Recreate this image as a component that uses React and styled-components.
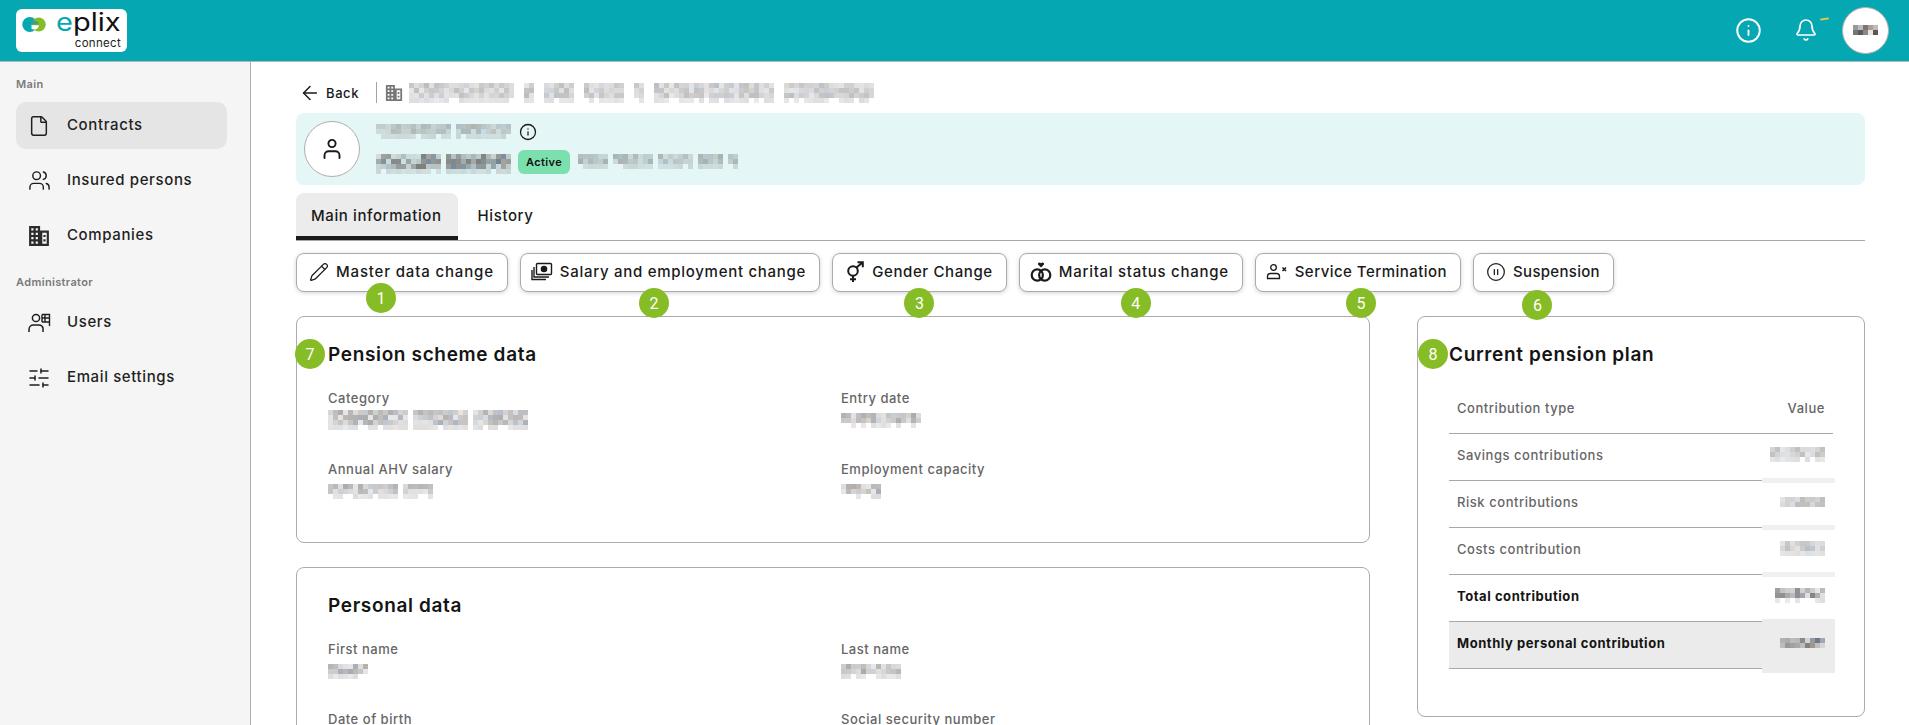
import styled, { createGlobalStyle } from "styled-components";
import { ArrowLeft, Bell, CirclePause, File, Info, Pencil, SlidersHorizontal, Users } from "lucide-react";

const GlobalStyle = createGlobalStyle`
  html, body {
    margin: 0;
    height: 100%;
    overflow: hidden;
    background: #fff;
    font-family: "Inter", "Noto Sans", sans-serif;
    color: #1a1a1a;
  }
  * { box-sizing: border-box; }
`

// blurred personal data in the screenshot, drawn as 5px cells
function seeded(seed) {
  let s = seed * 7919 + 13
  return () => {
    s = (s * 16807) % 2147483647
    return (s % 1000) / 1000
  }
}

function Mosaic({ w, rows = 3, seed = 1, strength = 0.35, gaps = [] }) {
  const rnd = seeded(seed)
  const cols = Math.round(w / 5)
  const cells = []
  for (let c = 0; c < cols; c++) {
    if (gaps.includes(c)) continue
    for (let r = 0; r < rows; r++) {
      const edge = rows > 2 && r === rows - 1
      const v = rnd()
      if (edge && v < 0.25) continue
      const opacity = (edge ? 0.1 : 0.14) + v * (edge ? 0.1 : strength)
      const hue = rnd()
      const fill = hue < 0.33 ? "#5d5148" : hue < 0.66 ? "#4c5a6c" : "#555555"
      cells.push(<rect key={`${c}-${r}`} x={c * 5} y={r * 5} width="5" height="5" fill={fill} fillOpacity={opacity} />)
    }
  }
  return <MosaicBox width={cols * 5} height={rows * 5}>{cells}</MosaicBox>
}

function BuildingIcon({ size = 20, color = "#2b2b2b" }) {
  return (
    <svg width={size} height={size} viewBox="0 0 20 20">
      <path fill={color} fillRule="evenodd" d="M1 1h10v4h8v14H1V1Zm2 2v2h2V3H3Zm4 0v2h2V3H7ZM3 7v2h2V7H3Zm4 0v2h2V7H7Zm-4 4v2h2v-2H3Zm4 0v2h2v-2H7Zm-4 4v2h2v-2H3Zm4 0v2h2v-2H7Zm6-8v10h4V7h-4Zm1 2h2v2h-2V9Zm0 4h2v2h-2v-2Z" />
    </svg>
  )
}

function UserAdminIcon() {
  return (
    <svg width="24" height="24" viewBox="0 0 24 24" fill="none" stroke="#1f1f1f" strokeWidth="1.5">
      <circle cx="9" cy="7" r="3.6" />
      <path d="M2 21v-2.5c0-2.6 2-4.5 4.5-4.5H12c2 0 3.5 1.2 4 3v4" />
      <path d="M15 3.5h7.5V15M15 3.5V11M18 3.5V11M15 7h7.5M15 11h7.5" strokeWidth="1.4" />
    </svg>
  )
}

function PersonIcon() {
  return (
    <svg width="24" height="24" viewBox="0 0 24 24" fill="none" stroke="#1a1a1a" strokeWidth="1.9" strokeLinecap="round">
      <circle cx="12" cy="6.5" r="3.6" />
      <path d="M4.5 21v-2.5c0-2.4 1.8-4.2 4.2-4.2h6.6c2.4 0 4.2 1.8 4.2 4.2V21" />
    </svg>
  )
}

function SalaryIcon() {
  return (
    <svg width="22" height="20" viewBox="0 0 22 20" fill="none" stroke="#1a1a1a" strokeWidth="1.4">
      <rect x="5.5" y="1.5" width="15" height="11" rx="1" />
      <circle cx="13" cy="7" r="2.6" fill="#1a1a1a" />
      <path d="M3 5v10h15M1 8v9.5h14" />
    </svg>
  )
}

function GenderIcon() {
  return (
    <svg width="20" height="22" viewBox="0 0 20 22" fill="none" stroke="#1a1a1a" strokeWidth="2">
      <circle cx="8" cy="10" r="4.8" />
      <path d="M11.5 6.5 17.5 1.5M12.5 1.3h5.3v5M8 15v6M5 18.3h6" />
    </svg>
  )
}

function RingsIcon() {
  return (
    <svg width="22" height="22" viewBox="0 0 22 22" fill="none" stroke="#1a1a1a" strokeWidth="2.2">
      <circle cx="7.3" cy="14" r="5.6" />
      <circle cx="14.7" cy="14" r="5.6" />
      <path d="M11 6.6 8.2 3.8c-1.2-1.6 1.4-3.2 2.8-1.5 1.4-1.7 4-.1 2.8 1.5L11 6.6Z" fill="#1a1a1a" stroke="none" />
    </svg>
  )
}

function TerminationIcon() {
  return (
    <svg width="22" height="18" viewBox="0 0 22 18" fill="none" stroke="#1a1a1a" strokeWidth="1.3">
      <circle cx="7.5" cy="4.5" r="2.8" />
      <path d="M1.5 15.5v-2c0-2 1.4-3 3-3h6c1.6 0 3 1 3 3v2h-12Z" />
      <path d="M16.5 4.5l3.5 3.5M20 4.5 16.5 8" strokeWidth="1.5" />
    </svg>
  )
}

const navMain = [
  { label: "Contracts", icon: <File size={22} strokeWidth={1.6} />, active: true },
  { label: "Insured persons", icon: <Users size={23} strokeWidth={1.5} /> },
  { label: "Companies", icon: <BuildingIcon size={22} /> },
]

const navAdmin = [
  { label: "Users", icon: <UserAdminIcon /> },
  { label: "Email settings", icon: <SlidersHorizontal size={24} strokeWidth={1.5} /> },
]

const actions = [
  { label: "Master data change", icon: <Pencil size={20} strokeWidth={1.5} />, n: 1, x: -21, y: 2, track: 0.84 },
  { label: "Salary and employment change", icon: <SalaryIcon />, n: 2, x: -16, y: 7, track: 0.72 },
  { label: "Gender Change", icon: <GenderIcon />, n: 3, x: 0, y: 7, track: 0.62 },
  { label: "Marital status change", icon: <RingsIcon />, n: 4, x: 5, y: 7, track: 0.72 },
  { label: "Service Termination", icon: <TerminationIcon />, n: 5, x: 3, y: 7, track: 0.47 },
  { label: "Suspension", icon: <CirclePause size={20} strokeWidth={1.5} />, n: 6, x: -6, y: 9, track: 0.3 },
]

const contributions = [
  { label: "Savings contributions", w: 55, rows: 3, seed: 31 },
  { label: "Risk contributions", w: 45, rows: 2, seed: 32 },
  { label: "Costs contribution", w: 45, rows: 3, seed: 33 },
  { label: "Total contribution", w: 50, rows: 3, seed: 34, bold: true, strength: 0.6 },
  { label: "Monthly personal contribution", w: 45, rows: 2, seed: 35, bold: true, strength: 0.7, shaded: true },
]

export default function App() {
  return (
    <>
      <GlobalStyle />
      <Page>
        <Header>
          <Logo>
            <svg width="24" height="15" viewBox="0 0 25 16">
              <circle cx="8" cy="8" r="8" fill="#07a8b2" />
              <circle cx="17.5" cy="8" r="7.5" fill="#86bc25" />
              <path d="M10 8h7.5c-.4-2.6-2.5-4.2-4.8-4.2-1.3 0-2.3.4-3.1 1 .5.9.6 2 .4 3.2Z" fill="#3f9c8e" />
              <path d="M9.5 8.7h8.3c-.3 2.8-2.4 4.7-5 4.7-1.2 0-2.4-.4-3.2-1.1.6-1.1.4-2.4-.1-3.6Z" fill="#fff" />
            </svg>
            <LogoWords>
              <LogoName><em>e</em>plix</LogoName>
              <LogoSub>connect</LogoSub>
            </LogoWords>
          </Logo>
          <HeaderActions>
            <Info size={27} color="#fff" strokeWidth={1.7} />
            <BellWrap>
              <Bell size={24} color="#fff" strokeWidth={1.7} />
              <BellMark />
            </BellWrap>
            <HeaderAvatar>
              <Mosaic w={25} rows={2} seed={40} strength={0.9} />
            </HeaderAvatar>
          </HeaderActions>
        </Header>

        <Body>
          <Sidebar>
            <SectionLabel $top={12} $bottom={8}>Main</SectionLabel>
            <NavList>
              {navMain.map((item) => (
                <NavItem key={item.label} $active={item.active}>
                  <NavIcon>{item.icon}</NavIcon>
                  <NavLabel>{item.label}</NavLabel>
                </NavItem>
              ))}
            </NavList>
            <SectionLabel $top={13} $bottom={7}>Administrator</SectionLabel>
            <NavList>
              {navAdmin.map((item) => (
                <NavItem key={item.label}>
                  <NavIcon>{item.icon}</NavIcon>
                  <NavLabel>{item.label}</NavLabel>
                </NavItem>
              ))}
            </NavList>
          </Sidebar>

          <Main>
            <Breadcrumb>
              <BackLink>
                <ArrowLeft size={22} strokeWidth={1.6} />
                Back
              </BackLink>
              <Divider />
              <BuildingIcon size={18} color="#777" />
              <CrumbBlur>
                <Mosaic w={465} rows={4} seed={2} strength={0.24} gaps={[21, 22, 25, 26, 33, 34, 43, 44, 47, 48, 73, 74]} />
              </CrumbBlur>
            </Breadcrumb>

            <PersonBand>
              <PersonAvatar><PersonIcon /></PersonAvatar>
              <PersonText>
                <PersonRow>
                  <Mosaic w={135} rows={3} seed={3} strength={0.25} gaps={[15]} />
                  <Info size={18} strokeWidth={1.7} />
                </PersonRow>
                <PersonRow>
                  <NameBlur>
                    <Mosaic w={135} rows={4} seed={4} strength={0.6} gaps={[13]} />
                  </NameBlur>
                  <StatusPill>Active</StatusPill>
                  <Mosaic w={160} rows={3} seed={5} strength={0.3} gaps={[6, 15, 23, 29]} />
                </PersonRow>
              </PersonText>
            </PersonBand>

            <Tabs>
              <Tab $active>Main information</Tab>
              <Tab>History</Tab>
            </Tabs>

            <ActionBar>
              {actions.map((a) => (
                <ActionButton key={a.label} $track={a.track}>
                  <ActionIcon>{a.icon}</ActionIcon>
                  {a.label}
                  <ButtonBadge $x={a.x} $y={a.y}>{a.n}</ButtonBadge>
                </ActionButton>
              ))}
            </ActionBar>

            <Columns>
              <Stack>
                <Card>
                  <CardBadge $left={-2}>7</CardBadge>
                  <CardTitle>Pension scheme data</CardTitle>
                  <FieldGrid $gap={27}>
                    <Field>
                      <FieldLabel>Category</FieldLabel>
                      <FieldValue><Mosaic w={200} rows={4} seed={6} gaps={[16, 28]} /></FieldValue>
                    </Field>
                    <Field>
                      <FieldLabel>Entry date</FieldLabel>
                      <FieldValue><Mosaic w={80} rows={3} seed={7} /></FieldValue>
                    </Field>
                    <Field>
                      <FieldLabel>Annual AHV salary</FieldLabel>
                      <FieldValue><Mosaic w={105} rows={3} seed={8} gaps={[14]} /></FieldValue>
                    </Field>
                    <Field>
                      <FieldLabel>Employment capacity</FieldLabel>
                      <FieldValue><Mosaic w={40} rows={3} seed={9} /></FieldValue>
                    </Field>
                  </FieldGrid>
                </Card>
                <Card>
                  <CardTitle>Personal data</CardTitle>
                  <FieldGrid $gap={26}>
                    <Field>
                      <FieldLabel>First name</FieldLabel>
                      <FieldValue><Mosaic w={40} rows={3} seed={10} /></FieldValue>
                    </Field>
                    <Field>
                      <FieldLabel>Last name</FieldLabel>
                      <FieldValue><Mosaic w={60} rows={3} seed={11} /></FieldValue>
                    </Field>
                    <Field>
                      <FieldLabel>Date of birth</FieldLabel>
                    </Field>
                    <Field>
                      <FieldLabel>Social security number</FieldLabel>
                    </Field>
                  </FieldGrid>
                </Card>
              </Stack>

              <Card $tall>
                <CardBadge $left={0}>8</CardBadge>
                <CardTitle>Current pension plan</CardTitle>
                <PlanTable>
                  <PlanRow>
                    <span>Contribution type</span>
                    <span>Value</span>
                  </PlanRow>
                  {contributions.map((c) => (
                    <PlanRow key={c.label} $bold={c.bold} $shaded={c.shaded} $smudge>
                      <span>{c.label}</span>
                      <PlanValue>
                        <Mosaic w={c.w} rows={c.rows} seed={c.seed} strength={c.strength ?? 0.25} />
                      </PlanValue>
                    </PlanRow>
                  ))}
                </PlanTable>
              </Card>
            </Columns>
          </Main>
        </Body>
      </Page>
    </>
  );
}

const Page = styled.div`
  height: 100vh;
  display: flex;
  flex-direction: column;
  overflow: hidden;
`

const Header = styled.header`
  flex: none;
  height: 62px;
  background: #05a8b2;
  border-bottom: 1px solid #b5b5b5;
  display: flex;
  align-items: center;
  justify-content: space-between;
  padding: 0 20px 1px 16px;
`

const Logo = styled.div`
  width: 111px;
  height: 43px;
  background: #fff;
  border-radius: 6px;
  display: flex;
  align-items: flex-start;
  padding: 8px 6px 0 6px;
  gap: 8px;
`

const LogoWords = styled.div`
  flex: 1;
  display: flex;
  flex-direction: column;
  align-items: flex-end;
  margin-top: -7px;
`

const LogoName = styled.div`
  font-size: 25px;
  line-height: 25px;
  font-weight: 400;
  color: #111;
  transform: scaleX(1.16);
  transform-origin: right center;
  em {
    font-style: normal;
    color: #07a8b2;
  }
`

const LogoSub = styled.div`
  font-size: 11.5px;
  line-height: 12px;
  letter-spacing: 0.3px;
  color: #222;
  margin-top: 2px;
`

const HeaderActions = styled.div`
  display: flex;
  align-items: center;
`

const BellWrap = styled.div`
  position: relative;
  display: flex;
  margin: 0 24px 0 32px;
`

const BellMark = styled.span`
  position: absolute;
  top: 0;
  right: -11px;
  width: 9px;
  height: 1.5px;
  border-radius: 1px;
  background: #d9c65a;
  transform: rotate(-8deg);
`

const HeaderAvatar = styled.div`
  width: 47px;
  height: 47px;
  border-radius: 50%;
  background: #fff;
  border: 1px solid #b9b0aa;
  display: flex;
  align-items: center;
  justify-content: center;
`

const Body = styled.div`
  flex: 1;
  min-height: 0;
  display: grid;
  grid-template-columns: 251px 1fr;
`

const Sidebar = styled.aside`
  background: #f5f5f5;
  border-right: 1px solid #b0b0b0;
  padding: 0 23px 0 16px;
`

const SectionLabel = styled.div`
  font-size: 11px;
  line-height: 20px;
  font-weight: 600;
  letter-spacing: 0.35px;
  color: #7a7a7a;
  margin: ${({ $top, $bottom }) => `${$top}px 0 ${$bottom}px`};
`

const NavList = styled.nav`
  display: flex;
  flex-direction: column;
  gap: 8px;
`

const NavItem = styled.div`
  height: 47px;
  display: flex;
  align-items: center;
  gap: 16px;
  padding-left: 11px;
  border-radius: 10px;
  background: ${({ $active }) => ($active ? "#e5e5e5" : "transparent")};
  font-size: 15px;
  font-weight: 500;
  letter-spacing: 0.62px;
  color: #1f1f1f;
`

const NavIcon = styled.span`
  width: 24px;
  display: flex;
  justify-content: center;
`

const NavLabel = styled.span`
  margin-bottom: 2px;
`

const Main = styled.main`
  padding: 20px 44px 0 45px;
  min-width: 0;
`

const Breadcrumb = styled.div`
  height: 21px;
  display: flex;
  align-items: center;
  margin-bottom: 10px;
`

const BackLink = styled.div`
  display: flex;
  align-items: center;
  gap: 5px;
  padding-left: 3px;
  font-size: 13px;
  font-weight: 500;
  letter-spacing: 0.6px;
`

const Divider = styled.span`
  width: 1px;
  height: 21px;
  background: #a5a5a5;
  margin: 0 8px 0 17px;
`

const CrumbBlur = styled.span`
  margin-left: 6px;
`

const MosaicBox = styled.svg`
  display: block;
  flex: none;
  shape-rendering: crispEdges;
`

const PersonBand = styled.section`
  height: 72px;
  background: #e4f6f6;
  border-radius: 8px;
  display: flex;
  align-items: center;
  gap: 16px;
  padding: 0 0 1px 8px;
`

const PersonAvatar = styled.div`
  width: 56px;
  height: 56px;
  border-radius: 50%;
  background: #fff;
  border: 1px solid #aeaeae;
  display: flex;
  align-items: center;
  justify-content: center;
`

const PersonText = styled.div`
  display: flex;
  flex-direction: column;
  gap: 9px;
  margin-bottom: 1px;
`

const PersonRow = styled.div`
  display: flex;
  align-items: center;
  gap: 8px;
`

const NameBlur = styled.span`
  padding-top: 4px;
  margin-right: -1px;
`

const StatusPill = styled.span`
  width: 52px;
  height: 24px;
  border-radius: 6px;
  background: #7bdfae;
  display: flex;
  align-items: center;
  justify-content: center;
  font-size: 11px;
  font-weight: 600;
  letter-spacing: 0.4px;
  color: #111;
`

const Tabs = styled.div`
  margin-top: 8px;
  height: 48px;
  display: flex;
  border-bottom: 1px solid #a8a8a8;
`

const Tab = styled.div`
  height: 47px;
  display: flex;
  align-items: center;
  padding: ${({ $active }) => ($active ? "2px 16px 0 15px" : "0 20px 2px")};
  font-size: 15px;
  font-weight: 500;
  letter-spacing: 0.6px;
  background: ${({ $active }) => ($active ? "#ececec" : "transparent")};
  border-radius: 8px 8px 0 0;
  border-bottom: ${({ $active }) => ($active ? "4px solid #1a1a1a" : "none")};
`

const ActionBar = styled.div`
  margin-top: 12px;
  display: flex;
  gap: 12px;
`

const ActionButton = styled.button`
  position: relative;
  height: 39px;
  display: flex;
  align-items: center;
  gap: 6px;
  padding: 0 13px 2px 10px;
  background: #fff;
  border: 1px solid #ababab;
  border-radius: 8px;
  box-shadow: 0 1px 4px rgba(0, 0, 0, 0.18);
  font-family: inherit;
  font-size: 15px;
  font-weight: 500;
  letter-spacing: ${({ $track }) => $track}px;
  color: #1a1a1a;
  white-space: nowrap;
`

const ActionIcon = styled.span`
  width: 23px;
  display: flex;
  justify-content: center;
`

const Badge = styled.span`
  position: absolute;
  z-index: 2;
  width: 30px;
  height: 30px;
  border-radius: 50%;
  background: #86bc25;
  display: flex;
  align-items: center;
  justify-content: center;
  font-family: "Roboto", sans-serif;
  font-size: 16px;
  font-weight: 400;
  letter-spacing: 0;
  color: #fff;
`

const ButtonBadge = styled(Badge)`
  left: calc(50% - 15px + ${({ $x }) => $x}px);
  top: calc(100% - 10px + ${({ $y }) => $y}px);
`

const CardBadge = styled(Badge)`
  left: ${({ $left }) => $left}px;
  top: 22px;
`

const Columns = styled.div`
  margin-top: 24px;
  display: grid;
  grid-template-columns: 1fr 448px;
  gap: 47px;
  align-items: start;
`

const Stack = styled.div`
  display: flex;
  flex-direction: column;
  gap: 24px;
`

const Card = styled.section`
  position: relative;
  border: 1px solid #ababab;
  border-radius: 8px;
  padding: 24px 31px 39px;
  padding-bottom: ${({ $tall }) => ($tall ? "47px" : "39px")};
`

const CardTitle = styled.h2`
  margin: 0 0 19px;
  font-size: 19px;
  line-height: 28px;
  font-weight: 600;
  letter-spacing: 0.65px;
  color: #141414;
`

const FieldGrid = styled.div`
  display: grid;
  grid-template-columns: 513px 1fr;
  row-gap: ${({ $gap }) => $gap}px;
`

const Field = styled.div`
  min-width: 0;
`

const FieldLabel = styled.div`
  font-size: 13px;
  line-height: 20px;
  font-weight: 500;
  letter-spacing: 0.52px;
  color: #666;
`

const FieldValue = styled.div`
  height: 24px;
  display: flex;
  align-items: center;
`

const PlanTable = styled.div`
  margin-top: -1px;
`

const PlanRow = styled.div`
  position: relative;
  height: 47px;
  display: flex;
  align-items: center;
  justify-content: space-between;
  padding: 0 8px 5px;
  border-bottom: 1px solid #a8a8a8;
  font-size: 13px;
  font-weight: ${({ $bold }) => ($bold ? 700 : 500)};
  letter-spacing: 0.55px;
  color: ${({ $bold }) => ($bold ? "#141414" : "#666")};
  background: ${({ $shaded }) => ($shaded ? "#ebebeb" : "transparent")};

  ${({ $smudge, $shaded }) => $smudge && `
    &::after {
      content: "";
      position: absolute;
      right: -2px;
      width: 73px;
      top: ${$shaded ? "-3px" : "auto"};
      bottom: ${$shaded ? "-5px" : "-3px"};
      height: ${$shaded ? "auto" : "5px"};
      background: ${$shaded ? "#ececec" : "#f0f0f0"};
    }
  `}
`

const PlanValue = styled.span`
  position: relative;
  z-index: 1;
`
